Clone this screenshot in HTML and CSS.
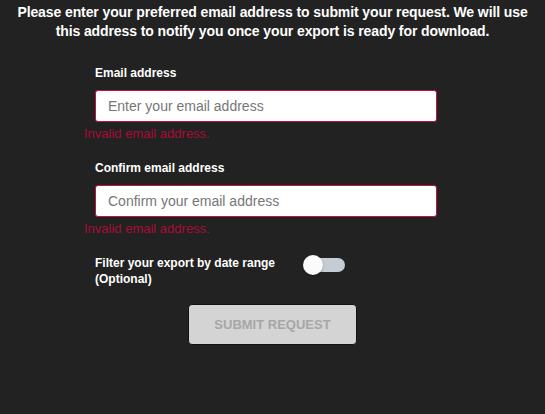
FILE: index.html
```html
<!DOCTYPE html>
<html lang="en">
<head>
<meta charset="utf-8">
<title>Export request</title>
<link rel="stylesheet" href="styles.css">
</head>
<body>
<div class="page">
  <p class="intro">Please enter your preferred email address to submit your request. We will use this address to notify you once your export is ready for download.</p>
  <form class="form">
    <div class="field">
      <label class="label" for="email">Email address</label>
      <input class="input" id="email" type="email" placeholder="Enter your email address">
      <div class="error">Invalid email address.</div>
    </div>
    <div class="field">
      <label class="label" for="confirm">Confirm email address</label>
      <input class="input" id="confirm" type="email" placeholder="Confirm your email address">
      <div class="error">Invalid email address.</div>
    </div>
    <div class="toggle-row">
      <span class="toggle-label">Filter your export by date range (Optional)</span>
      <span class="toggle"><span class="track"></span><span class="knob"></span></span>
    </div>
  </form>
  <div class="actions">
    <button class="submit" type="button" disabled>SUBMIT REQUEST</button>
  </div>
</div>
</body>
</html>
```
FILE: styles.css
```css
html, body {
  margin: 0;
  padding: 0;
  background: #222222;
}
body {
  font-family: "Liberation Sans", Arial, sans-serif;
  color: #ffffff;
  width: 545px;
  height: 414px;
  overflow: hidden;
}
.page {
  display: flex;
  flex-direction: column;
}
.intro {
  margin: 0;
  padding: 3px 14px 0;
  text-align: center;
  font-size: 14px;
  font-weight: bold;
  line-height: 19px;
  letter-spacing: -0.1px;
}
.form {
  width: 342px;
  margin: 25px 0 0 95px;
  display: flex;
  flex-direction: column;
}
.field {
  display: flex;
  flex-direction: column;
  margin-bottom: 19px;
}
.label {
  font-size: 12px;
  font-weight: bold;
  line-height: 15px;
  margin-bottom: 9px;
}
.input {
  box-sizing: border-box;
  width: 342px;
  height: 32px;
  margin: 0;
  padding: 0 12px;
  border: 1px solid #c1123c;
  border-radius: 3px;
  background: #ffffff;
  font-family: "Liberation Sans", Arial, sans-serif;
  font-size: 14px;
  color: #333;
  outline: none;
}
.input::placeholder {
  color: #777777;
}
.error {
  margin: 4px 0 0 -11px;
  font-size: 13px;
  line-height: 16px;
  color: #a80d37;
}
.toggle-row {
  display: flex;
  align-items: flex-start;
  gap: 8px;
  margin-top: -1px;
}
.toggle-label {
  width: 200px;
  font-size: 12px;
  font-weight: bold;
  line-height: 16px;
}
.toggle {
  position: relative;
  width: 42px;
  height: 20px;
  flex: none;
}
.track {
  position: absolute;
  left: 6px;
  right: 0;
  top: 3px;
  height: 14px;
  border-radius: 7px;
  background: #c6ccd4;
}
.knob {
  position: absolute;
  left: 0;
  top: 0;
  width: 20px;
  height: 20px;
  border-radius: 50%;
  background: #fbfbfb;
  box-shadow: 0 1px 2px rgba(0,0,0,0.3);
}
.actions {
  display: flex;
  justify-content: center;
  margin-top: 17px;
}
.submit {
  box-sizing: border-box;
  width: 169px;
  height: 41px;
  border: 1px solid #111111;
  border-radius: 4px;
  background: #d4d4d4;
  color: #a7a7a7;
  font-family: "Liberation Sans", Arial, sans-serif;
  font-size: 13px;
  font-weight: bold;
  padding: 0;
}
```
